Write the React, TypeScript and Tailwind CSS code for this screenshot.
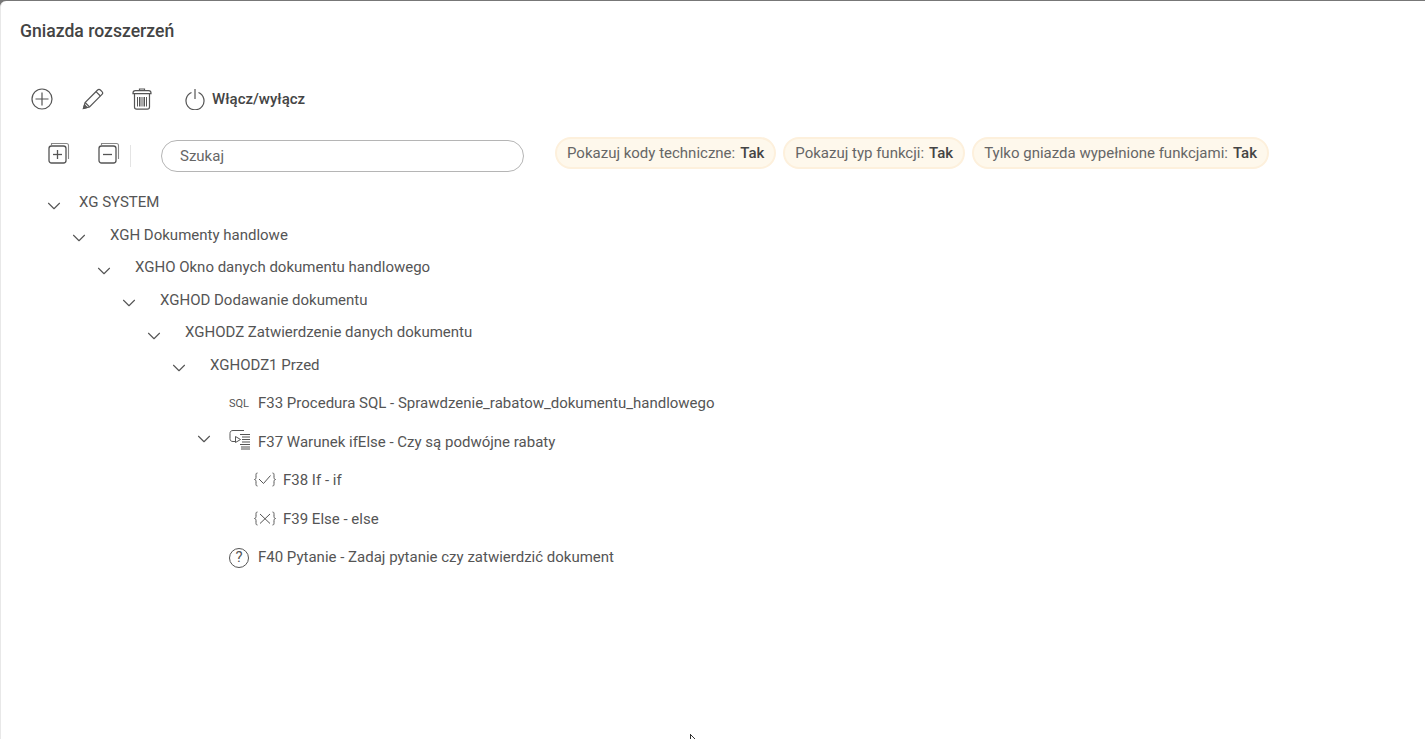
import { ChevronDown } from "lucide-react";
import type { ReactNode } from "react";

const font = "font-['Roboto',sans-serif]";

function PlusCircle() {
  return (
    <svg width="22" height="22" viewBox="0 0 22 22" fill="none" stroke="#555" strokeWidth="1.2">
      <circle cx="11" cy="11" r="10" />
      <path d="M11 4.5v13M4.5 11h13" />
    </svg>
  );
}

function Pencil() {
  return (
    <svg width="22" height="22" viewBox="0 0 22 22" fill="none" stroke="#555" strokeWidth="1.2">
      <path d="M1.5 20.5l1.6-6L15.6 2c.8-.8 2-.8 2.8 0l1.6 1.6c.8.8.8 2 0 2.8L7.5 18.9z" />
      <path d="M3.1 14.5l4.4 4.4M14 3.6l4.4 4.4" />
      <path d="M1.5 20.5l1-3.6 2.6 2.6z" fill="#555" />
    </svg>
  );
}

function Trash() {
  return (
    <svg width="20" height="22" viewBox="0 0 20 22" fill="none" stroke="#555" strokeWidth="1.2">
      <path d="M7.5 2.5V1h5v1.5" />
      <path d="M1 5c0-1.4 1-2.4 2.4-2.4h13.2C18 2.600 19 3.600 19 5v.6H1z" />
      <path d="M2.500 5.600V19c0 1.400.8 2.200 2.200 2.200h10.600c1.400 0 2.200-.8 2.200-2.200V5.600" />
      <path d="M5.500 9v9.500M7.500 9v9.500M9 9v9.500M11 9v9.500M12.500 9v9.500M14.500 9v9.500" strokeWidth="1" />
    </svg>
  );
}

function Power() {
  return (
    <svg width="20" height="22" viewBox="0 0 20 22" fill="none" stroke="#555" strokeWidth="1.2">
      <path d="M6.500 4.500a9 9 0 1 0 7 0" />
      <path d="M10 1v10" />
    </svg>
  );
}

function Stack({ minus }: { minus?: boolean }) {
  return (
    <svg width="22" height="22" viewBox="0 0 22 22" fill="none" stroke="#555" strokeWidth="1.300">
      <path d="M3.500 3V1.500h15c1.200 0 2 .8 2 2v13.500" stroke="#888" strokeWidth="1.100" />
      <rect x="1" y="4" width="17" height="17" rx="2.500" />
      <path d="M5 12.500h9" />
      {!minus && <path d="M9.500 8v9" />}
    </svg>
  );
}

function IfElseIcon() {
  return (
    <svg className="mb-[4px]" width="22" height="22" viewBox="0 0 22 22" fill="none" stroke="#555" strokeWidth="1">
      <path d="M6 12.500H4C2 12.500 1 11.500 1 9.500V4.500C1 2.500 2 1.500 4 1.500h11" />
      <path d="M6.500 7.500v6l5-3z" />
      <path d="M11 5.500h10M13 8h8M13 10.500h8M13 13h8M11 15.500h10M12 18h9M12 20h9" strokeWidth="1.100" />
    </svg>
  );
}

function BraceIcon({ cross }: { cross?: boolean }) {
  return (
    <svg className="mb-[2px]" width="22" height="15" viewBox="0 0 22 15" fill="none" stroke="#555" strokeWidth="1">
      <path d="M3.500 1C2 1 2 2 2 3.500v2c0 1.200-.5 1.700-1.500 2C1.500 7.800 2 8.300 2 9.500v2C2 13 2 14 3.500 14" />
      <path d="M18.500 1C20 1 20 2 20 3.500v2c0 1.200.5 1.700 1.500 2-1 .3-1.500.8-1.500 2v2c0 1.500 0 2.500-1.500 2.500" />
      {cross ? <path d="M6 3l10 9.500M16 3L6 12.500" /> : <path d="M5 7l4.500 4.500L16.500 3.500" />}
    </svg>
  );
}

function QuestionIcon() {
  return (
    <div className="flex h-[20px] w-[20px] items-center justify-center rounded-full border border-[#555] text-[15px] leading-none text-[#555]">
      ?
    </div>
  );
}

function Chip({ label }: { label: string }) {
  return (
    <div className="flex h-[32px] items-center gap-[5px] rounded-full border-2 border-[#fdf0dc] bg-[#fef8ec] px-[10px] text-[15px] text-[#666]">
      <span>{label}:</span>
      <span className="font-medium text-[#444]">Tak</span>
    </div>
  );
}

function Row({
  indent,
  height,
  chevron,
  gap,
  icon,
  text,
}: {
  indent: string;
  height: string;
  chevron?: string;
  gap: string;
  icon?: ReactNode;
  text: string;
}) {
  return (
    <div className={`flex items-center ${height} ${indent}`}>
      <div className={`flex w-[14px] shrink-0 items-center justify-center ${chevron ?? ""}`}>
        {chevron && <ChevronDown size={22} strokeWidth={1.2} color="#555" className="shrink-0" />}
      </div>
      <div className={`flex shrink-0 items-center ${gap}`}>
        {icon}
        <span className="whitespace-nowrap text-[15px] text-[#555]">{text}</span>
      </div>
    </div>
  );
}

export default function App() {
  return (
    <div className={`h-screen w-full overflow-hidden bg-[#777] ${font}`}>
      <div className="mt-px flex h-[738px] flex-col rounded-tl-md border-l border-[#e8e8e8] bg-white">
        {/* Title */}
        <h1 className="pl-[19px] pt-[20px] text-[17.6px] leading-[20px] font-medium text-[#444]">Gniazda rozszerzeń</h1>

        {/* Main toolbar */}
        <div className="mt-[46px] flex h-[24px] items-center pl-[30px]">
          <PlusCircle />
          <div className="ml-[29px]">
            <Pencil />
          </div>
          <div className="ml-[28px]">
            <Trash />
          </div>
          <div className="ml-[33px] flex items-center gap-[7px]">
            <Power />
            <span className="text-[15px] font-medium text-[#444]">Włącz/wyłącz</span>
          </div>
        </div>

        {/* Search and filters */}
        <div className="mt-[27px] flex h-[36px] items-center pl-[47px]">
          <div className="mb-[6px]">
            <Stack />
          </div>
          <div className="mb-[6px] ml-[28px]">
            <Stack minus />
          </div>
          <div className="ml-[10px] h-[22px] w-px bg-[#e4e4e4]" />
          <div className="ml-[30px] flex h-[32px] w-[363px] items-center rounded-full border border-[#b5b5b5] pl-[18px] text-[15px] text-[#666]">
            Szukaj
          </div>
          <div className="mb-[6px] ml-[31px] flex items-center gap-[7px]">
            <Chip label="Pokazuj kody techniczne" />
            <Chip label="Pokazuj typ funkcji" />
            <Chip label="Tylko gniazda wypełnione funkcjami" />
          </div>
        </div>

        {/* Tree */}
        <div className="mt-[12px] flex flex-col">
          <Row indent="pl-[46px]" height="h-[33px]" chevron="pt-[6px]" gap="ml-[18px]" text="XG SYSTEM" />
          <Row indent="pl-[71px]" height="h-[32px]" chevron="pt-[6px]" gap="ml-[24px]" text="XGH Dokumenty handlowe" />
          <Row indent="pl-[96px]" height="h-[33px]" chevron="pt-[6px]" gap="ml-[24px]" text="XGHO Okno danych dokumentu handlowego" />
          <Row indent="pl-[121px]" height="h-[32px]" chevron="pt-[6px]" gap="ml-[24px]" text="XGHOD Dodawanie dokumentu" />
          <Row indent="pl-[146px]" height="h-[33px]" chevron="pt-[6px]" gap="ml-[24px]" text="XGHODZ Zatwierdzenie danych dokumentu" />
          <Row indent="pl-[171px]" height="h-[32px]" chevron="pt-[6px]" gap="ml-[24px]" text="XGHODZ1 Przed" />
          <div className="h-[3px]" />
          <Row
            indent="pl-[196px]"
            height="h-[39px]"
            gap="ml-[18px] gap-[7px]"
            icon={<span className="w-[22px] text-[11px] leading-none text-[#555]">SQL</span>}
            text="F33 Procedura SQL - Sprawdzenie_rabatow_dokumentu_handlowego"
          />
          <Row
            indent="pl-[196px]"
            height="h-[38px]"
            chevron="pb-[6px]"
            gap="ml-[18px] gap-[7px]"
            icon={<IfElseIcon />}
            text="F37 Warunek ifElse - Czy są podwójne rabaty"
          />
          <Row
            indent="pl-[221px]"
            height="h-[39px]"
            gap="ml-[18px] gap-[7px]"
            icon={<BraceIcon />}
            text="F38 If - if"
          />
          <Row
            indent="pl-[221px]"
            height="h-[38px]"
            gap="ml-[18px] gap-[7px]"
            icon={<BraceIcon cross />}
            text="F39 Else - else"
          />
          <Row
            indent="pl-[196px]"
            height="h-[39px]"
            gap="ml-[18px] gap-[9px]"
            icon={<QuestionIcon />}
            text="F40 Pytanie - Zadaj pytanie czy zatwierdzić dokument"
          />
        </div>

        {/* Mouse pointer from the capture */}
        <svg className="absolute left-[690px] top-[734px]" width="6" height="5" viewBox="0 0 6 5">
          <path d="M0.500 0v5M0.500 0.500L5 5" stroke="#333" fill="none" />
        </svg>
      </div>
    </div>
  );
}
